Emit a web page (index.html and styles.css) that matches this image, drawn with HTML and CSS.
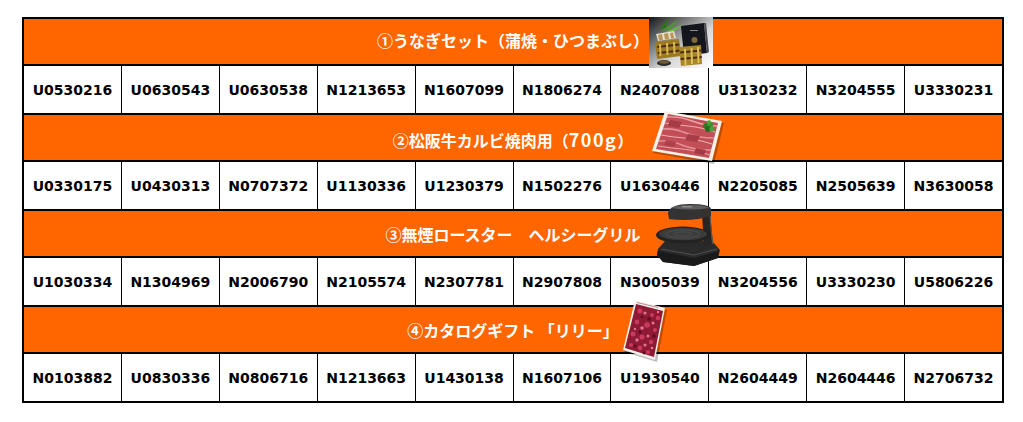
FILE: index.html
```html
<!DOCTYPE html>
<html lang="ja">
<head>
<meta charset="utf-8">
<title>賞品当選番号</title>
<link rel="stylesheet" href="styles.css">
</head>
<body>
<div class="board">
  <div class="head">
    <span class="title title-up">①うなぎセット（蒲焼・ひつまぶし）</span>
    <svg class="pic pic-eel" viewBox="0 0 64 51" aria-hidden="true">
      <defs>
        <linearGradient id="eg" x1="0" y1="0" x2="1" y2="1">
          <stop offset="0" stop-color="#151515"/>
          <stop offset="0.3" stop-color="#777"/>
          <stop offset="0.6" stop-color="#d8d8d8"/>
          <stop offset="1" stop-color="#ffffff"/>
        </linearGradient>
      </defs>
      <rect width="64" height="51" fill="url(#eg)"/>
      <path d="M10 13 L20 0 L17 11 Z" fill="#2f6f22"/>
      <path d="M12 14 L30 2 L22 12 Z" fill="#4a9530"/>
      <path d="M14 16 L35 7 L24 15 Z" fill="#6cb844"/>
      <path d="M32 9 L55 6 L58 36 L35 39 Z" fill="#15151d"/>
      <path d="M55 6 L57 6 L60 35 L58 36 Z" fill="#4a4a52"/>
      <rect x="41" y="13" width="8" height="1" fill="#8a8a8a"/>
      <circle cx="45.5" cy="23" r="3" fill="#7d6b38"/>
      <path d="M7 17 L25 14 L27 21 L9 24 Z" fill="#e6e0cf"/>
      <path d="M9 18 L13 17 L14 23 L10 23.5 Z" fill="#b69656"/>
      <path d="M15 17 L19 16 L20 22 L16 22.5 Z" fill="#b69656"/>
      <path d="M21 16 L24 15.5 L25 21 L22 21.5 Z" fill="#b69656"/>
      <path d="M6 25 L30 22 L32 39 L8 42 Z" fill="#9c7a22"/>
      <path d="M8 29 L30 26.5 L30.4 28.5 L8.3 31 Z" fill="#4a2c10"/>
      <path d="M8.6 35 L31 32.5 L31.3 34.5 L8.9 37 Z" fill="#4a2c10"/>
      <path d="M10 27 L12 27 L12.5 39 L10.5 39 Z" fill="#d9b850"/>
      <path d="M17 26 L19 26 L19.5 38 L17.5 38 Z" fill="#d9b850"/>
      <path d="M24 25 L26 25 L26.5 37 L24.5 37 Z" fill="#d9b850"/>
      <path d="M30 30 L52 28 L53 47 L32 49 Z" fill="#a8862a"/>
      <path d="M31 34.5 L52.3 32.5 L52.4 34.5 L31.2 36.5 Z" fill="#4a2c10"/>
      <path d="M31.5 41 L52.7 39 L52.8 41 L31.7 43 Z" fill="#4a2c10"/>
      <path d="M35 32 L37 32 L37.5 48 L35.5 48 Z" fill="#dfc05a"/>
      <path d="M41.5 31 L43.5 31 L44 47 L42 47 Z" fill="#dfc05a"/>
      <path d="M48 30 L50 30 L50.5 46 L48.5 46 Z" fill="#dfc05a"/>
      <ellipse cx="15" cy="46" rx="7" ry="3" fill="#2c2c2c"/>
      <ellipse cx="15" cy="45" rx="5" ry="1.8" fill="#6c5a36"/>
    </svg>
  </div>
  <div class="codes">
    <div class="code">U0530216</div><div class="code">U0630543</div><div class="code">U0630538</div><div class="code">N1213653</div><div class="code">N1607099</div><div class="code">N1806274</div><div class="code">N2407088</div><div class="code">U3130232</div><div class="code">N3204555</div><div class="code">U3330231</div>
  </div>

  <div class="head">
    <span class="title title-down">②松阪牛カルビ焼肉用（<span class="num">700g</span>）</span>
    <svg class="pic pic-beef" viewBox="0 0 78 56" aria-hidden="true">
      <path d="M18 5 L76 15 L66 56 L5 45 Z" fill="#000" opacity="0.25"/>
      <path d="M17 3 L74 13 L64 53 L4 43 Z" fill="#f5f0e8"/>
      <path d="M20 6 L70 15 L61 50 L8 41 Z" fill="#c24e58"/>
      <path d="M19 9 Q30 8 44 13 T69 18" stroke="#eba2a7" stroke-width="1.4" fill="none"/>
      <path d="M17 15 Q28 17 40 18 T67 24" stroke="#efacb0" stroke-width="1.2" fill="none"/>
      <path d="M15 21 Q26 20 38 25 T66 30" stroke="#e69096" stroke-width="1.6" fill="none"/>
      <path d="M13 27 Q24 29 36 30 T64 36" stroke="#efacb0" stroke-width="1.1" fill="none"/>
      <path d="M11 33 Q22 32 34 37 T63 42" stroke="#e69096" stroke-width="1.4" fill="none"/>
      <path d="M10 38 Q22 40 34 41 T62 47" stroke="#eba2a7" stroke-width="1.1" fill="none"/>
      <path d="M22 12 L34 14 L31 20 L20 18 Z" fill="#a33a44"/>
      <path d="M40 26 L52 28 L49 34 L37 32 Z" fill="#a83d47"/>
      <path d="M18 32 L28 34 L26 39 L16 37 Z" fill="#ad4049"/>
      <path d="M48 40 L58 42 L56 47 L46 45 Z" fill="#a33a44"/>
      <circle cx="58" cy="18" r="3" fill="#2f7a25"/>
      <circle cx="62" cy="17" r="3" fill="#3d8f2e"/>
      <circle cx="60" cy="21" r="3" fill="#2a6a20"/>
      <circle cx="64" cy="21" r="2.6" fill="#46a036"/>
      <circle cx="61" cy="14.5" r="2.2" fill="#4aa238"/>
    </svg>
  </div>
  <div class="codes">
    <div class="code">U0330175</div><div class="code">U0430313</div><div class="code">N0707372</div><div class="code">U1130336</div><div class="code">U1230379</div><div class="code">N1502276</div><div class="code">U1630446</div><div class="code">N2205085</div><div class="code">N2505639</div><div class="code">N3630058</div>
  </div>

  <div class="head">
    <span class="title">③無煙ロースター　ヘルシーグリル</span>
    <svg class="pic pic-grill" viewBox="0 0 70 66" aria-hidden="true">
      <path d="M6 49 L13 41 L60 41 L68 50 L66 58 L42 66 L11 62 L5 55 Z" fill="#2a2a2a"/>
      <path d="M6 51 L42 58 L67 51 L66 58 L42 66 L11 62 L5 55 Z" fill="#1a1a1a"/>
      <path d="M9 49 L42 55 L65 49" stroke="#595959" stroke-width="0.8" fill="none"/>
      <path d="M50 14 L58 12 L61 44 L52 46 Z" fill="#262626"/>
      <path d="M57 12 L58 12 L61 44 L60 44 Z" fill="#5a5a5a"/>
      <ellipse cx="31" cy="35" rx="27" ry="8.5" fill="#232323"/>
      <ellipse cx="31" cy="34" rx="24" ry="6.2" fill="#3c3c3c"/>
      <ellipse cx="31" cy="34" rx="17" ry="4" fill="none" stroke="#585858" stroke-width="0.6"/>
      <ellipse cx="31" cy="34" rx="9" ry="2" fill="none" stroke="#585858" stroke-width="0.6"/>
      <path d="M16 13 Q18 4 38 4 Q58 4 59 9 L59 16 Q40 22 17 19 Z" fill="#333"/>
      <path d="M19 8 Q24 5 38 5 Q55 5 57 8 Q40 11 19 8 Z" fill="#5e5e5e"/>
      <rect x="30" y="6" width="10" height="1.5" fill="#8a8a8a"/>
    </svg>
  </div>
  <div class="codes">
    <div class="code">U1030334</div><div class="code">N1304969</div><div class="code">N2006790</div><div class="code">N2105574</div><div class="code">N2307781</div><div class="code">N2907808</div><div class="code">N3005039</div><div class="code">N3204556</div><div class="code">U3330230</div><div class="code">U5806226</div>
  </div>

  <div class="head">
    <span class="title">④カタログギフト 「リリー」</span>
    <svg class="pic pic-catalog" viewBox="0 0 52 66" aria-hidden="true">
      <path d="M18 4 L49 12 L39 64 L6 54 Z" fill="#000" opacity="0.25"/>
      <path d="M17 2 L47 10 L37 62 L5 52 Z" fill="#f2f0ea"/>
      <path d="M18 6 L45 13 L36 59 L7 50 Z" fill="#8e1a34"/>
      <path d="M19 4.5 L40 9.5" stroke="#c06a7a" stroke-width="0.8"/>
      <g fill="#c83a60">
        <circle cx="22" cy="13" r="2.5"/><circle cx="34" cy="17" r="2"/><circle cx="40" cy="20" r="2.2"/>
        <circle cx="19" cy="24" r="2.4"/><circle cx="29" cy="27" r="2.8"/><circle cx="37" cy="32" r="2"/>
        <circle cx="15" cy="36" r="2.5"/><circle cx="24" cy="39" r="2.6"/><circle cx="33" cy="44" r="2.2"/>
        <circle cx="13" cy="47" r="2"/><circle cx="22" cy="50" r="2.4"/><circle cx="30" cy="54" r="2"/>
      </g>
      <g fill="#e27494">
        <circle cx="27" cy="15" r="1.6"/><circle cx="24" cy="30" r="1.8"/><circle cx="35" cy="25" r="1.5"/>
        <circle cx="19" cy="42" r="1.7"/><circle cx="30" cy="38" r="1.5"/><circle cx="27" cy="47" r="1.6"/>
        <circle cx="17" cy="31" r="1.2"/><circle cx="34" cy="50" r="1.3"/><circle cx="40" cy="14" r="1.2"/>
      </g>
      <g fill="#5e0c22">
        <circle cx="31" cy="21" r="1.8"/><circle cx="22" cy="34" r="1.6"/><circle cx="36" cy="38" r="1.7"/>
        <circle cx="17" cy="48" r="1.5"/><circle cx="26" cy="55" r="1.4"/><circle cx="24" cy="19" r="1.3"/>
      </g>
    </svg>
  </div>
  <div class="codes">
    <div class="code">N0103882</div><div class="code">U0830336</div><div class="code">N0806716</div><div class="code">N1213663</div><div class="code">U1430138</div><div class="code">N1607106</div><div class="code">U1930540</div><div class="code">N2604449</div><div class="code">N2604446</div><div class="code">N2706732</div>
  </div>
</div>
</body>
</html>
```
FILE: styles.css
```css
html, body {
  margin: 0;
  padding: 0;
  background: #ffffff;
}

body {
  font-family: "DejaVu Sans", Verdana, sans-serif;
}

.board {
  box-sizing: border-box;
  width: 982px;
  margin: 17px 0 0 22px;
  padding: 2px;
  background: #000000;
  display: grid;
  row-gap: 2px;
}

.head {
  position: relative;
  height: 45px;
  background: #ff6600;
  display: flex;
  align-items: center;
  justify-content: center;
}

.title {
  color: #ffffff;
  font-family: "Noto Sans CJK JP", "Noto Sans", sans-serif;
  font-weight: 700;
  font-size: 16px;
  line-height: 20px;
  white-space: pre;
}

.num {
  font-size: 18px;
  letter-spacing: 1.5px;
}

.title-up {
  padding-bottom: 4px;
}

.title-down {
  padding-top: 4px;
}

.codes {
  display: grid;
  grid-template-columns: repeat(10, 1fr);
  column-gap: 1px;
  height: 47px;
}

.code {
  background: #ffffff;
  display: flex;
  align-items: center;
  justify-content: center;
  font-family: "DejaVu Sans", Verdana, sans-serif;
  font-weight: 700;
  font-size: 14px;
  color: #000000;
}

.pic {
  position: absolute;
  display: block;
}

.pic-eel {
  left: 625px;
  top: -2px;
  width: 64px;
  height: 51px;
}

.pic-beef {
  left: 624px;
  top: -7px;
  width: 78px;
  height: 56px;
}

.pic-grill {
  left: 628px;
  top: -11px;
  width: 70px;
  height: 66px;
}

.pic-catalog {
  left: 594px;
  top: -9px;
  width: 52px;
  height: 66px;
}
```
